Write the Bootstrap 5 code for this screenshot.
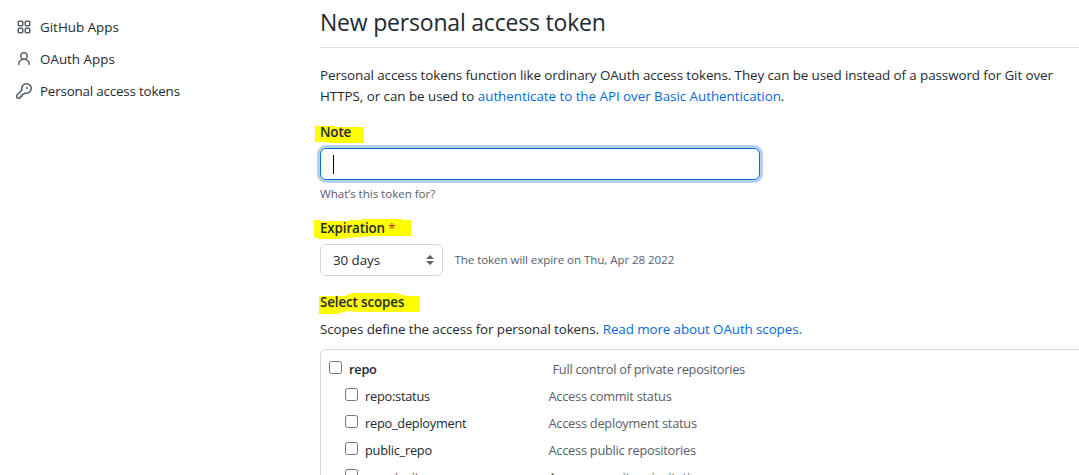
<!DOCTYPE html>
<html lang="en">
<head>
<meta charset="utf-8">
<meta name="viewport" content="width=device-width, initial-scale=1">
<title>New personal access token</title>
<link rel="stylesheet" href="https://cdn.jsdelivr.net/npm/bootstrap@5.3.0/dist/css/bootstrap.min.css">
<style>
  body { font-family: "Open Sans", "Noto Sans", sans-serif; font-size: 13.4px; line-height: 21px; color: #24292f; overflow: hidden; height: 475px; }
  a { color: #0969da; text-decoration: none; }
  .side-menu { width: 312px; padding: 11px 0 0 16px; }
  .side-menu a { color: #24292f; height: 32px; gap: 8px; }
  .side-menu a:last-child { letter-spacing: -.19px; }
  .side-menu svg { width: 16px; height: 16px; color: #57606a; }
  .settings-main { min-width: 0; height: 475px; overflow: hidden; padding-left: 8px; }
  .page-title { font-size: 23px; letter-spacing: -.2px; font-weight: 400; line-height: 36px; height: 48px; padding-top: 4px; border-bottom: 1px solid #d8dee4; margin: 0 0 17px; }
  .intro { margin-bottom: 15px; letter-spacing: -.088px; }
  .intro-lead { letter-spacing: -.04px; }
  .muted { color: #57606a; }
  .hint { font-size: 11.6px; line-height: 18px; letter-spacing: -.04px; }
  .note-hint { margin-bottom: 15px; }
  .expiry { letter-spacing: -.085px; margin-left: 11.5px; }
  .field-label { font-weight: 600; letter-spacing: -.12px; isolation: isolate; width: max-content; margin-bottom: 5px; }
  .required { color: #cf222e; font-weight: 400; }
  .marker { z-index: -1; overflow: visible; left: 0; top: 0; width: 1px; height: 1px; fill: #ff0; }
  .note-input { width: 440px; height: 32px; border: 1px solid #0969da; border-radius: 6px; box-shadow: 0 0 0 3px #b4d1f4; padding-left: 12px; margin-bottom: 5px; }
  .text-caret { width: 1px; height: 19px; background: #000; }
  .days-select { width: 123px; height: 32px; border: 1px solid #d0d7de; border-radius: 6px; padding: 0 8px 0 12px; letter-spacing: -.08px; }
  .days-select svg { width: 8px; height: 10px; fill: #57606a; }
  .scopes-text { letter-spacing: -.1px; margin: 6px 0 9px; }
  .scopes-text a { margin-left: .5px; }
  .scope-box { border: 1px solid #d0d7de; border-right: 0; border-bottom: 0; border-radius: 6px 0 0 0; padding: 6px 0 0 8px; font-size: 12.8px; letter-spacing: -.25px; }
  .scope-row { height: 27px; }
  .scope-row input { appearance: none; flex: none; width: 13px; height: 13px; border: 1px solid #767676; border-radius: 2.5px; background: #fff; margin: 0 7px 4px 0; }
  .scope-name { width: 183.5px; }
  .scope-root { font-weight: 600; width: 203.5px; }
  .scope-child { padding-left: 16px; }
</style>
</head>
<body class="bg-white">
<div class="d-flex">
  <nav class="side-menu flex-shrink-0">
    <a href="#" class="d-flex align-items-center"><svg viewBox="0 0 16 16" fill="none" stroke="currentColor" stroke-width="1.5"><rect x="2.25" y="2.25" width="4.5" height="4.5" rx=".9"/><rect x="9.25" y="2.25" width="4.5" height="4.5" rx=".9"/><rect x="2.25" y="9.25" width="4.5" height="4.5" rx=".9"/><rect x="9.25" y="9.25" width="4.5" height="4.5" rx=".9"/></svg><span>GitHub Apps</span></a>
    <a href="#" class="d-flex align-items-center"><svg viewBox="0 0 16 16" fill="currentColor"><path fill-rule="evenodd" d="M10.5 5a2.5 2.5 0 11-5 0 2.5 2.5 0 015 0zm.061 3.073a4 4 0 10-5.123 0 6.004 6.004 0 00-3.431 5.142.75.75 0 001.498.07 4.5 4.5 0 018.99 0 .75.75 0 101.498-.07 6.005 6.005 0 00-3.432-5.142z"/></svg><span>OAuth Apps</span></a>
    <a href="#" class="d-flex align-items-center"><svg viewBox="0 0 16 16" fill="currentColor"><path fill-rule="evenodd" d="M6.5 5.5a4 4 0 112.731 3.795.75.75 0 00-.768.18L7.44 10.5H6.25a.75.75 0 00-.75.75v1.19l-.06.06H4.25a.75.75 0 00-.75.75v1.19l-.06.06H1.75a.25.25 0 01-.25-.25v-1.69l5.024-5.023a.75.75 0 00.181-.768A3.995 3.995 0 016.5 5.5zm4-5.5a5.5 5.5 0 00-5.348 6.788L.22 11.72a.75.75 0 00-.22.53v2C0 15.216.784 16 1.75 16h2a.75.75 0 00.53-.22l.5-.5a.75.75 0 00.22-.53V14h.75a.75.75 0 00.53-.22l.5-.5a.75.75 0 00.22-.53V12h.75a.75.75 0 00.53-.22l.932-.932A5.5 5.5 0 1010.5 0zm.5 6a1 1 0 100-2 1 1 0 000 2z"/></svg><span>Personal access tokens</span></a>
  </nav>
  <main class="settings-main flex-grow-1">
    <h1 class="page-title">New personal access token</h1>
    <p class="intro text-nowrap">Personal access tokens function like ordinary OAuth access tokens. They can be used instead of a password for Git over<br><span class="intro-lead">HTTPS, or can be used to <a href="#">authenticate to the API over Basic Authentication</a>.</span></p>

    <div class="field-label position-relative"><svg class="marker position-absolute"><path d="M-5 4H15V5H44V21H8V20H-5Z"/></svg>Note</div>
    <div class="note-input d-flex align-items-center"><span class="text-caret"></span></div>
    <div class="hint note-hint muted">What’s this token for?</div>

    <div class="field-label position-relative"><svg class="marker position-absolute"><path d="M-6 2H0V3H28L30 2H42V1H82V2H91V18H55L37 19L18 21H-1L-6 19Z"/></svg>Expiration <span class="required">*</span></div>
    <div class="d-flex align-items-center mb-3">
      <div class="days-select d-flex align-items-center justify-content-between">30 days <svg viewBox="0 0 8 10"><path d="M4 0L8 4H0ZM0 6H8L4 10Z"/></svg></div>
      <span class="hint muted expiry">The token will expire on Thu, Apr 28 2022</span>
    </div>

    <div class="field-label position-relative"><svg class="marker position-absolute"><path d="M-1 4H25L32 1L75 1L87 4H100V20H40L27 19L17 22H-1Z"/></svg>Select scopes</div>
    <div class="scopes-text text-nowrap">Scopes define the access for personal tokens. <a href="#">Read more about OAuth scopes.</a></div>

    <div class="scope-box text-nowrap">
      <div class="scope-row d-flex align-items-center"><input type="checkbox"><span class="scope-root">repo</span><span class="muted">Full control of private repositories</span></div>
      <div class="scope-row scope-child d-flex align-items-center"><input type="checkbox"><span class="scope-name">repo:status</span><span class="muted">Access commit status</span></div>
      <div class="scope-row scope-child d-flex align-items-center"><input type="checkbox"><span class="scope-name">repo_deployment</span><span class="muted">Access deployment status</span></div>
      <div class="scope-row scope-child d-flex align-items-center"><input type="checkbox"><span class="scope-name">public_repo</span><span class="muted">Access public repositories</span></div>
      <div class="scope-row scope-child d-flex align-items-center"><input type="checkbox"><span class="scope-name">repo:invite</span><span class="muted">Access repository invitations</span></div>
    </div>
  </main>
</div>
<script src="https://cdn.jsdelivr.net/npm/bootstrap@5.3.0/dist/js/bootstrap.bundle.min.js"></script>
</body>
</html>
